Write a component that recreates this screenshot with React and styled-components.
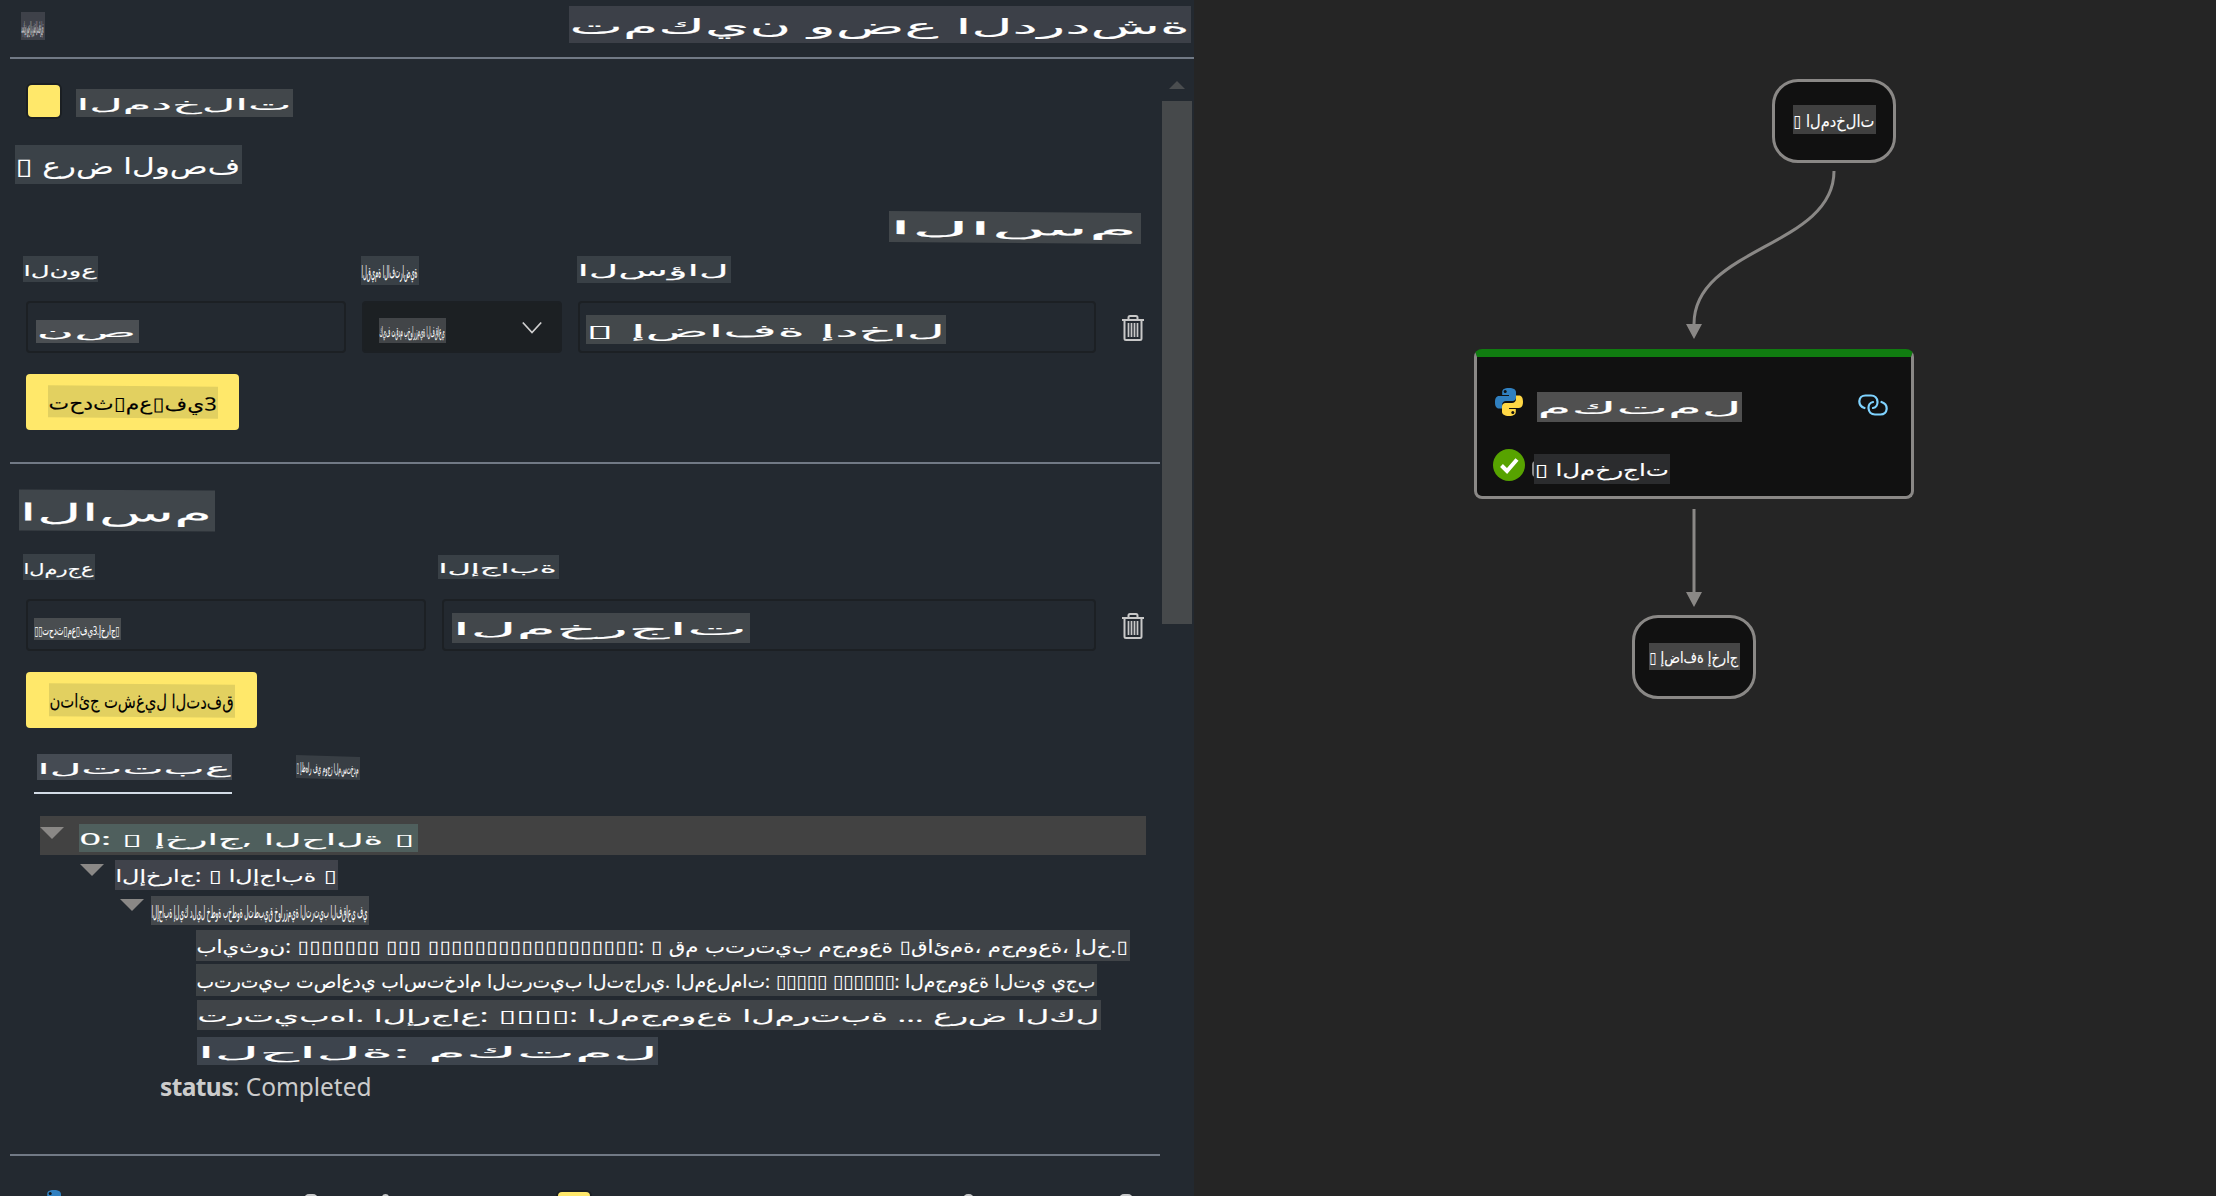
import React, { useLayoutEffect, useRef, useState } from "react";
import styled, { createGlobalStyle } from "styled-components";

const GlobalStyle = createGlobalStyle`
  * { box-sizing: border-box; }
  body { margin: 0; background: #252525; overflow: hidden; }
  body, input, button { font-family: "Noto Sans", "DejaVu Sans", sans-serif; }
`;

/* ---------- fitted captions ---------- */

const Patch = styled.span`
  display: block;
  flex: none;
  overflow: hidden;
  width: ${(p) => p.$w}px;
  height: ${(p) => p.$h}px;
  margin-top: ${(p) => p.$mt || 0}px;
  margin-left: ${(p) => p.$ml || 0}px;
  text-align: left;
  background: ${(p) => p.$bg || "#42474b"};
  color: ${(p) => p.$fg || "#fff"};
  transform: skewY(${(p) => p.$tilt || 0}deg);
`;

const Glyphs = styled.span`
  display: inline-block;
  white-space: pre;
  transform-origin: 0 0;
  direction: ltr;
  unicode-bidi: bidi-override;
  font-family: "Noto Sans", "DejaVu Sans", sans-serif;
  font-feature-settings: "init" 0, "medi" 0, "fina" 0, "rlig" 0, "liga" 0;
  font-size: ${(p) => p.$h * 0.575}px;
  line-height: ${(p) => p.$h * 1.085}px;
  letter-spacing: -0.075em;
  word-spacing: 0.04em;
  -webkit-text-stroke: 0.12px currentColor;
`;

const Box = styled.span`
  letter-spacing: 0.06em;
  -webkit-text-stroke: 0;
`;

function Caption({ children, w, h, ...rest }) {
  const ref = useRef(null);
  const [scale, setScale] = useState(1);
  const text = [].concat(children).join("");
  useLayoutEffect(() => {
    const fit = () => setScale((w - 2) / ref.current.offsetWidth);
    fit();
    document.fonts?.ready.then(() => ref.current && fit());
  }, [w, text]);
  return (
    <Patch $w={w} $h={h} $mt={rest.mt} $ml={rest.ml} $bg={rest.bg} $fg={rest.fg} $tilt={rest.tilt}>
      <Glyphs ref={ref} $h={h} style={{ transform: `translateX(0.5px) scaleX(${scale})` }}>
        {text.split(/(▯+)/).map((part, i) => (part.startsWith("▯") ? <Box key={i}>{part}</Box> : part))}
      </Glyphs>
    </Patch>
  );
}

/* ---------- page frame ---------- */

const Page = styled.div`
  display: flex;
  width: 2216px;
  height: 1196px;
  overflow: hidden;
`;

const Panel = styled.section`
  flex: none;
  display: flex;
  flex-direction: column;
  width: 1194px;
  height: 1196px;
  overflow: hidden;
  background: #232930;
`;

const Header = styled.header`
  flex: none;
  display: flex;
  justify-content: space-between;
  align-items: flex-start;
  height: 59px;
  margin-left: 10px;
  padding: 6px 3px 0 11px;
  border-bottom: 2px solid #717985;
`;

const Body = styled.div`
  display: flex;
  flex: 1;
  min-height: 0;
`;

const Content = styled.div`
  flex: none;
  display: flex;
  flex-direction: column;
  width: 1162px;
  overflow: hidden;
`;

const Scrollbar = styled.div`
  display: flex;
  flex-direction: column;
  width: 30px;
`;

const ScrollUp = styled.div`
  align-self: center;
  margin: 22px 0 12px;
  border: 8px solid transparent;
  border-top: 0;
  border-bottom: 8px solid #4a4d4f;
`;

const Thumb = styled.div`
  height: 523px;
  background: #46494b;
`;

/* ---------- form pieces ---------- */

const Row = styled.div`
  flex: none;
  display: flex;
  align-items: flex-start;
  justify-content: ${(p) => (p.$end ? "flex-end" : "flex-start")};
  margin-top: ${(p) => p.$mt}px;
  padding-left: ${(p) => p.$pl || 0}px;
  padding-right: ${(p) => p.$pr || 0}px;
`;

const Labels = styled.div`
  flex: none;
  display: grid;
  grid-template-columns: ${(p) => p.$cols};
  height: ${(p) => p.$h}px;
  margin-top: ${(p) => p.$mt}px;
  padding-left: 23px;
`;

const Fields = styled.div`
  flex: none;
  display: flex;
  gap: 16px;
  height: 52px;
  margin-top: ${(p) => p.$mt}px;
  padding-left: 26px;
`;

const Field = styled.div`
  flex: none;
  display: flex;
  align-items: flex-start;
  width: ${(p) => p.$w}px;
  height: 52px;
  border: 2px solid #1c2024;
  border-radius: 4px;
`;

const Select = styled(Field)`
  justify-content: space-between;
  padding-right: 18px;
  background: #1c2023;
`;

const ChevronIcon = styled.svg`
  margin-top: 18px;
`;

const TrashIcon = styled.svg`
  margin: 14px 0 0 10px;
`;

const Swatch = styled.div`
  flex: none;
  width: 36px;
  height: 36px;
  border: 2px solid #1b1f23;
  border-radius: 6px;
  background: #ffe86a;
`;

const Button = styled.button`
  flex: none;
  display: flex;
  align-items: flex-start;
  width: ${(p) => p.$w}px;
  height: 56px;
  margin: 21px 0 0 26px;
  padding: 0;
  border: 0;
  border-radius: 4px;
  background: #ffe86a;
`;

const Rule = styled.hr`
  flex: none;
  width: 1150px;
  height: 2px;
  margin: ${(p) => p.$mt}px 0 0 10px;
  border: 0;
  background: #717985;
`;

/* ---------- tabs and trace tree ---------- */

const Tabs = styled.nav`
  flex: none;
  display: flex;
  gap: 64px;
  height: 40px;
  margin-top: 26px;
  padding-left: 34px;
`;

const Tab = styled.div`
  height: 40px;
  border-bottom: 2px solid ${(p) => (p.$active ? "#d3dce6" : "transparent")};
`;

const Tree = styled.div`
  flex: none;
  display: flex;
  flex-direction: column;
  margin: 22px 16px 0 40px;
`;

const Node = styled.div`
  display: flex;
  align-items: flex-start;
  height: ${(p) => p.$h}px;
  margin-top: ${(p) => p.$mt || 0}px;
  padding-left: ${(p) => p.$indent || 0}px;
  background: ${(p) => (p.$selected ? "#424242" : "transparent")};
`;

const Caret = styled.i`
  flex: none;
  margin-top: ${(p) => p.$mt}px;
  border: 12px solid transparent;
  border-top-color: #8a8886;
  border-bottom: 0;
`;

const Status = styled.div`
  margin: 5px 0 0 120px;
  font-size: 24.5px;
  line-height: 34px;
  letter-spacing: -0.05px;
  color: #ccc;

  b {
    letter-spacing: -0.6px;
  }
`;

const NextRow = styled.div`
  flex: none;
  display: flex;
  align-items: flex-start;
  height: 40px;
  margin-top: 34px;
  padding-left: 40px;
`;

const Tip = styled.i`
  flex: none;
  width: ${(p) => p.$w}px;
  height: 12px;
  margin: 4px 0 0 ${(p) => p.$ml}px;
  border-radius: 5px 5px 0 0;
  background: #c8c9ca;
`;

const SwatchSlot = styled.div`
  margin-left: 167px;
`;

/* ---------- graph canvas ---------- */

const Canvas = styled.main`
  position: relative;
  flex: 1;
  background: #252525;
`;

const Edges = styled.svg`
  position: absolute;
  left: 0;
  top: 0;
`;

const Pill = styled.div`
  position: absolute;
  left: ${(p) => p.$x}px;
  top: ${(p) => p.$y}px;
  display: flex;
  align-items: flex-start;
  width: 124px;
  height: 84px;
  border: 3px solid #8a8886;
  border-radius: 26px;
  background: #111;
`;

const Card = styled.div`
  position: absolute;
  left: 280px;
  top: 349px;
  width: 440px;
  height: 150px;
  border: 3px solid #8a8886;
  border-top: 8px solid #107c10;
  border-radius: 8px;
  background: #111;
`;

const CardRow = styled.div`
  display: flex;
  align-items: flex-start;
  height: ${(p) => p.$h}px;
  padding: ${(p) => p.$pad};
`;

const LinkSlot = styled.span`
  display: flex;
  margin: 6px 0 0 auto;
`;

const ClippedMark = styled.i`
  width: 8px;
  height: 16px;
  margin: 12px -6px 0 7px;
  border-left: 2px solid #8a8a8a;
  border-radius: 8px;
`;

/* ---------- drawings ---------- */

const Python = ({ size = 28 }) => (
  <svg width={size} height={size} viewBox="0 0 28 28">
    <path
      fill="#3080c0"
      d="M14 0C9 0 7.200 1.600 7.200 4.200V7H14v1H4C1.300 8 0 10.300 0 14.200S1.300 20.500 4 20.500h3V17c0-2.500 2-4 4-4h6.500c2 0 3.500-1.500 3.500-3.500V4.200C21 1.600 18.500 0 14 0z"
    />
    <path
      fill="#ffd845"
      d="M14 28c5 0 6.800-1.600 6.800-4.200V21H14v-1h10c2.700 0 4-2.300 4-6.200S26.700 7.500 24 7.500h-3V11c0 2.500-2 4-4 4h-6.500C8.500 15 7 16.500 7 18.500v5.300C7 26.400 9.500 28 14 28z"
    />
    <circle cx="10.200" cy="3.600" r="1.500" fill="#111" />
    <circle cx="17.800" cy="24.400" r="1.500" fill="#111" />
  </svg>
);

const Trash = () => (
  <TrashIcon width="22" height="26" viewBox="0 0 22 26" fill="none" stroke="#c8c8c8" strokeWidth="2">
    <path d="M0 5h22M6.500 5V2.500Q6.500 1 8 1h6q1.500 0 1.500 1.500V5M2.500 5v18.500Q2.500 25 4 25h14q1.500 0 1.500-1.500V5" />
    <path d="M6.500 8v14M9.500 8v14M12.500 8v14M15.500 8v14" strokeWidth="1.700" />
  </TrashIcon>
);

const Chevron = () => (
  <ChevronIcon width="20" height="14" viewBox="0 0 20 14" fill="none" stroke="#d0d0d0" strokeWidth="1.700">
    <path d="M.8 1.500 10 11.500l9.200-10" />
  </ChevronIcon>
);

const Link = () => (
  <svg width="30" height="22" viewBox="0 0 30 22" fill="none" stroke="#7fd3ff" strokeWidth="2.200" strokeLinecap="round">
    <path d="M6.500 14C-1 11.500 0 1.500 7.500 1.500H13C21 1.500 21.500 13 15 14" />
    <path d="M23.500 8C31 10.500 30 20.500 22.500 20.500H17C9 20.500 8.500 9 15 8" />
  </svg>
);

const Check = () => (
  <svg width="32" height="32" viewBox="0 0 32 32">
    <circle cx="16" cy="16" r="16" fill="#57a300" />
    <path d="M8.500 16.500l5.500 5.500L24 10.500" fill="none" stroke="#fff" strokeWidth="4" />
  </svg>
);

const B = (n) => "▯".repeat(n);

export default function App() {
  return (
    <Page>
      <GlobalStyle />
      <Panel>
        <Header>
          <Caption w={24} h={28} mt={6} bg="#3e4149">تمكين وضع الدردشة التفاعلية</Caption>
          <Caption w={622} h={37} bg="#3c4048">تمكين وضع الدردشة</Caption>
        </Header>
        <Body>
          <Content>
            <Row $mt={24} $pl={26}>
              <Swatch />
              <Caption w={217} h={28} mt={6} ml={14}>المدخلات</Caption>
            </Row>
            <Row $mt={26} $pl={15}>
              <Caption w={227} h={39} bg="#3b4248">{B(1)} عرض الوصف</Caption>
            </Row>
            <Row $mt={28} $end $pr={21}>
              <Caption w={252} h={31} tilt={0.45}>الاسم</Caption>
            </Row>
            <Labels $mt={13} $h={29} $cols="338px 216px 1fr">
              <Caption w={75} h={26} bg="#394046">النوع</Caption>
              <Caption w={58} h={29} bg="#394046">القيمة الافتراضية</Caption>
              <Caption w={154} h={27} bg="#394046">السؤال</Caption>
            </Labels>
            <Fields $mt={16}>
              <Field $w={320}>
                <Caption w={103} h={23} mt={17} ml={8} bg="#4b4f53">نص</Caption>
              </Field>
              <Select $w={200}>
                <Caption w={67} h={25} mt={15} ml={15} bg="#424548">كيف تقدم بخوارزمية الفقاعي</Caption>
                <Chevron />
              </Select>
              <Field $w={518}>
                <Caption w={360} h={29} mt={12} ml={6} bg="#43484b">{B(1)} إضافة إدخال</Caption>
              </Field>
              <Trash />
            </Fields>
            <Button $w={213}>
              <Caption w={170} h={32} mt={12} ml={22} bg="#e2d060" fg="#000" tilt={0.5}>
                {`تحدث${B(1)}مع${B(1)}في3`}
              </Caption>
            </Button>
            <Rule $mt={32} />
            <Row $mt={26} $pl={19}>
              <Caption w={196} h={41} bg="#40464b" tilt={0.3}>الاسم</Caption>
            </Row>
            <Labels $mt={23} $h={26} $cols="415px 1fr">
              <Caption w={72} h={26} bg="#394046">المرجع</Caption>
              <Caption w={121} h={24} mt={1} bg="#394046">الإجابة</Caption>
            </Labels>
            <Fields $mt={19}>
              <Field $w={400}>
                <Caption w={87} h={22} mt={17} ml={6} bg="#494d50">{`${B(2)}تحدث${B(1)}مع${B(1)}في3.إخراج${B(1)}`}</Caption>
              </Field>
              <Field $w={654}>
                <Caption w={298} h={30} mt={12} ml={8} bg="#42474b">المخرجات</Caption>
              </Field>
              <Trash />
            </Fields>
            <Button $w={231}>
              <Caption w={186} h={33} mt={12} ml={23} bg="#e2d060" fg="#000" tilt={0.4}>نتائج تشغيل التدفق</Caption>
            </Button>
            <Tabs>
              <Tab $active>
                <Caption w={195} h={26} ml={3} bg="#454b53">التتبع</Caption>
              </Tab>
              <Tab>
                <Caption w={64} h={23} mt={2} bg="#383e44" tilt={2}>{B(1)} إظهار في موجز المستخدم</Caption>
              </Tab>
            </Tabs>
            <Tree>
              <Node $h={39} $selected>
                <Caret $mt={11} />
                <Caption w={339} h={28} mt={8} ml={15} bg="#4f5f5d">{`0: ${B(1)} إخراج, الحالة ${B(1)}`}</Caption>
              </Node>
              <Node $h={31} $mt={5} $indent={40}>
                <Caret $mt={4} />
                <Caption w={223} h={30} ml={11} bg="#40434b">{`الإخراج: ${B(1)} الإجابة ${B(1)}`}</Caption>
              </Node>
              <Node $h={29} $mt={5} $indent={80}>
                <Caret $mt={3} />
                <Caption w={218} h={29} ml={7} bg="#44484c">
                  الإجابة إليك دليل خطوة بخطوة لتطبيق خوارزمية الترتيب الفقاعي في
                </Caption>
              </Node>
              <Node $h={31} $mt={5} $indent={156}>
                <Caption w={934} h={31} bg="#404448">
                  {`بايثون: ${B(7)} ${B(3)} ${B(18)}: ${B(1)} قم بترتيب مجموعة ${B(1)}قائمة، مجموعة، إلخ.${B(1)}`}
                </Caption>
              </Node>
              <Node $h={32} $mt={3} $indent={156}>
                <Caption w={901} h={32} bg="#3e4346">
                  {`بترتيب تصاعدي باستخدام الترتيب التجاري. المعلمات: ${B(5)} ${B(6)}: المجموعة التي يجب`}
                </Caption>
              </Node>
              <Node $h={30} $mt={4} $indent={157}>
                <Caption w={904} h={30} bg="#404448">
                  {`ترتيبها. الإرجاع: ${B(4)}: المجموعة المرتبة ... عرض الكل`}
                </Caption>
              </Node>
              <Node $h={28} $mt={7} $indent={157}>
                <Caption w={461} h={28} bg="#3d444d">الحالة: مكتمل</Caption>
              </Node>
              <Status>
                <b>status</b>: Completed
              </Status>
            </Tree>
            <Rule $mt={50} />
            <NextRow>
              <Python />
              <Tip $w={14} $ml={236} />
              <Tip $w={7} $ml={64} />
              <SwatchSlot>
                <Swatch />
              </SwatchSlot>
              <Tip $w={11} $ml={371} />
              <Tip $w={14} $ml={145} />
            </NextRow>
          </Content>
          <Scrollbar>
            <ScrollUp />
            <Thumb />
          </Scrollbar>
        </Body>
      </Panel>
      <Canvas>
        <Edges width="1022" height="1196" fill="none" stroke="#8a8886" strokeWidth="3">
          <path d="M640 171C640 247 500 247 500 324" />
          <path d="M500 509V592" />
          <path d="M492 324h16l-8 15zM492 592h16l-8 15z" fill="#8a8886" stroke="none" />
        </Edges>
        <Pill $x={578} $y={79}>
          <Caption w={83} h={29} mt={23} ml={18} bg="#404040">{B(1)} المدخلات</Caption>
        </Pill>
        <Card>
          <CardRow $h={61} $pad="31px 23px 0 18px">
            <Python />
            <Caption w={205} h={30} mt={4} ml={14} bg="#505050">مكتمل</Caption>
            <LinkSlot>
              <Link />
            </LinkSlot>
          </CardRow>
          <CardRow $h={66} $pad="31px 0 0 16px">
            <Check />
            <ClippedMark />
            <Caption w={136} h={30} mt={5} bg="#2b2c2e">{B(1)} المخرجات</Caption>
          </CardRow>
        </Card>
        <Pill $x={438} $y={615}>
          <Caption w={91} h={27} mt={25} ml={14} bg="#454545">{B(1)} إضافة إخراج</Caption>
        </Pill>
      </Canvas>
    </Page>
  );
}
